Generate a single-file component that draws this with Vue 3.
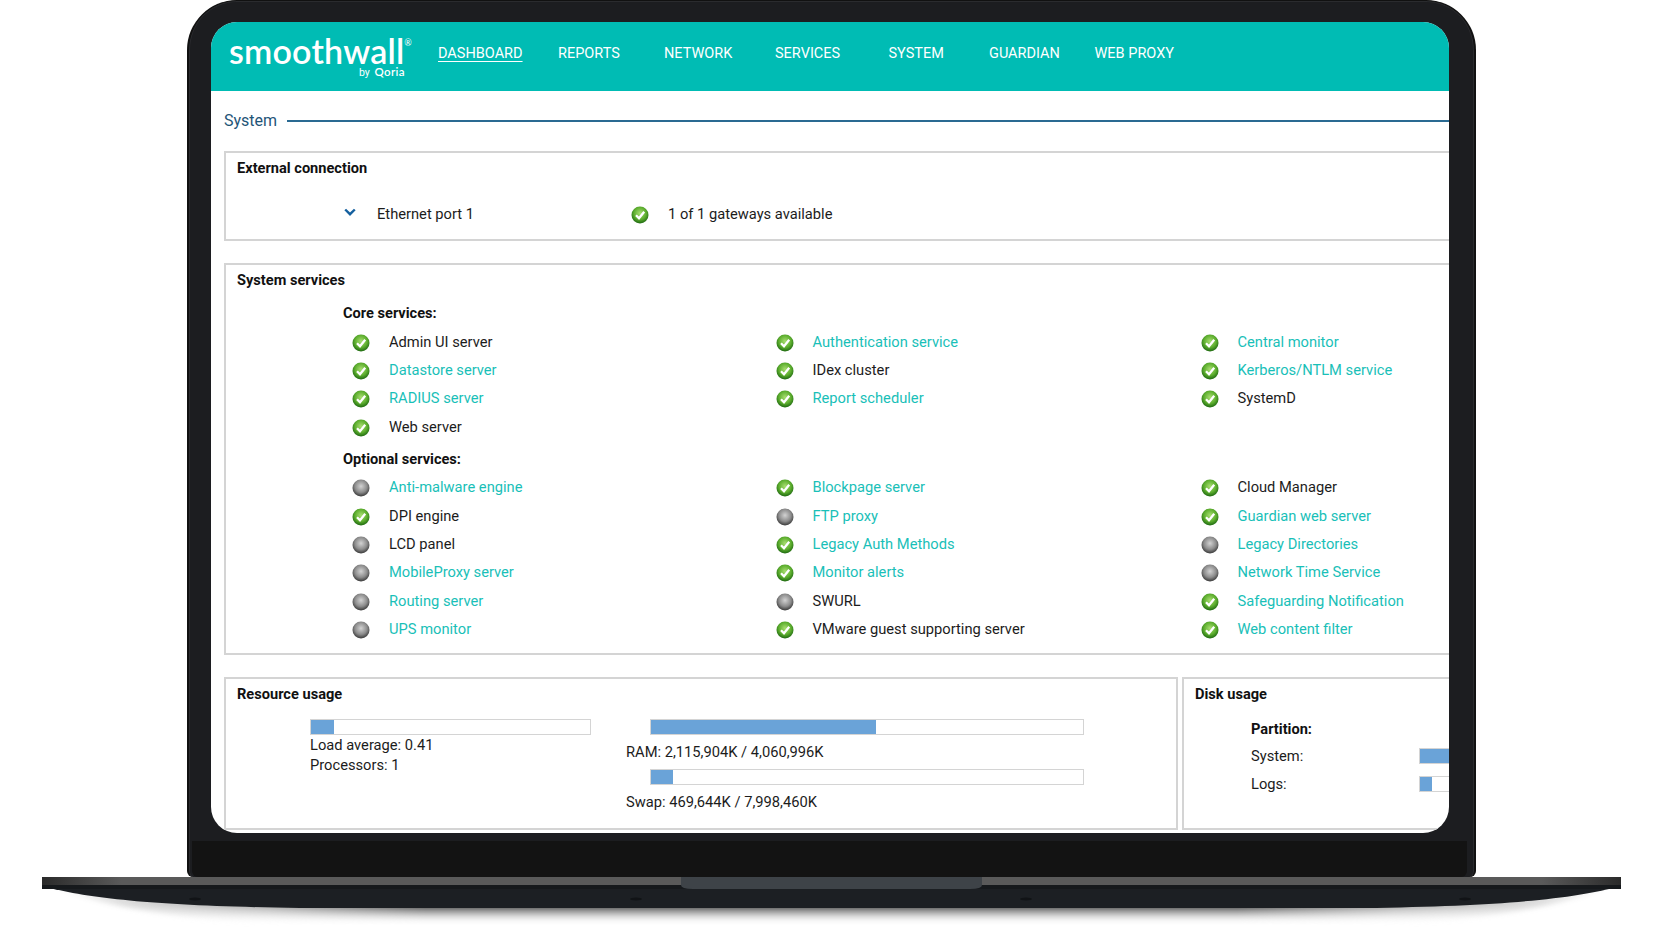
<script setup>
const navItems = [
  { label: 'DASHBOARD', active: true },
  { label: 'REPORTS' },
  { label: 'NETWORK' },
  { label: 'SERVICES' },
  { label: 'SYSTEM' },
  { label: 'GUARDIAN' },
  { label: 'WEB PROXY' },
]

// ok: status icon, link: teal text
const coreServices = [
  { name: 'Admin UI server', ok: true },
  { name: 'Authentication service', ok: true, link: true },
  { name: 'Central monitor', ok: true, link: true },
  { name: 'Datastore server', ok: true, link: true },
  { name: 'IDex cluster', ok: true },
  { name: 'Kerberos/NTLM service', ok: true, link: true },
  { name: 'RADIUS server', ok: true, link: true },
  { name: 'Report scheduler', ok: true, link: true },
  { name: 'SystemD', ok: true },
  { name: 'Web server', ok: true },
]

const optionalServices = [
  { name: 'Anti-malware engine', link: true },
  { name: 'Blockpage server', ok: true, link: true },
  { name: 'Cloud Manager', ok: true },
  { name: 'DPI engine', ok: true },
  { name: 'FTP proxy', link: true },
  { name: 'Guardian web server', ok: true, link: true },
  { name: 'LCD panel' },
  { name: 'Legacy Auth Methods', ok: true, link: true },
  { name: 'Legacy Directories', link: true },
  { name: 'MobileProxy server', link: true },
  { name: 'Monitor alerts', ok: true, link: true },
  { name: 'Network Time Service', link: true },
  { name: 'Routing server', link: true },
  { name: 'SWURL' },
  { name: 'Safeguarding Notification', ok: true, link: true },
  { name: 'UPS monitor', link: true },
  { name: 'VMware guest supporting server', ok: true },
  { name: 'Web content filter', ok: true, link: true },
]

const usage = {
  load: 8.4,
  ram: 52,
  swap: 5.1,
  system: 52,
  logs: 4.7,
}
</script>

<template>
  <div class="page">
    <svg class="defs" width="0" height="0" aria-hidden="true">
      <defs>
        <radialGradient id="greenDot" cx="50%" cy="40%" r="60%">
          <stop offset="0%" stop-color="#a8de70" />
          <stop offset="60%" stop-color="#5dae2e" />
          <stop offset="100%" stop-color="#1d6810" />
        </radialGradient>
        <radialGradient id="greyDot" cx="50%" cy="40%" r="60%">
          <stop offset="0%" stop-color="#d2d2d2" />
          <stop offset="60%" stop-color="#8c8c8c" />
          <stop offset="100%" stop-color="#383838" />
        </radialGradient>
      </defs>
    </svg>

    <div class="laptop">
      <div class="bezel">
        <div class="screen">
          <header class="topbar">
            <div class="logo">
              <div class="logo-main">smoothwall<sup>®</sup></div>
              <div class="logo-sub">by <b>Qoria</b></div>
            </div>
            <nav class="nav">
              <a v-for="item in navItems" :key="item.label" :class="{ active: item.active }">
                <span>{{ item.label }}</span>
              </a>
            </nav>
          </header>

          <main class="content">
            <div class="heading">
              <span>System</span>
              <i></i>
            </div>

            <section class="panel external">
              <h3>External connection</h3>
              <div class="port-row">
                <svg class="chevron" width="12" height="8" viewBox="0 0 12 8">
                  <path d="M1.2 1.5 6 6.2l4.8-4.7" fill="none" stroke="#15609f" stroke-width="2.4" />
                </svg>
                <span class="port-name">Ethernet port 1</span>
                <svg class="dot" viewBox="0 0 18 18">
                  <circle cx="9" cy="9" r="8.5" fill="url(#greenDot)" />
                  <path d="M5 9.2 8 12.2l5.2-6.4" fill="none" stroke="#fff" stroke-width="2.3" />
                </svg>
                <span>1 of 1 gateways available</span>
              </div>
            </section>

            <section class="panel services">
              <h3>System services</h3>
              <h4>Core services:</h4>
              <div class="service-grid">
                <div v-for="s in coreServices" :key="s.name" class="service">
                  <svg class="dot" viewBox="0 0 18 18">
                    <circle cx="9" cy="9" r="8.5" :fill="s.ok ? 'url(#greenDot)' : 'url(#greyDot)'" />
                    <path v-if="s.ok" d="M5 9.2 8 12.2l5.2-6.4" fill="none" stroke="#fff" stroke-width="2.3" />
                  </svg>
                  <span :class="{ link: s.link }">{{ s.name }}</span>
                </div>
              </div>
              <h4>Optional services:</h4>
              <div class="service-grid">
                <div v-for="s in optionalServices" :key="s.name" class="service">
                  <svg class="dot" viewBox="0 0 18 18">
                    <circle cx="9" cy="9" r="8.5" :fill="s.ok ? 'url(#greenDot)' : 'url(#greyDot)'" />
                    <path v-if="s.ok" d="M5 9.2 8 12.2l5.2-6.4" fill="none" stroke="#fff" stroke-width="2.3" />
                  </svg>
                  <span :class="{ link: s.link }">{{ s.name }}</span>
                </div>
              </div>
            </section>

            <div class="bottom-row">
              <section class="panel resource">
                <h3>Resource usage</h3>
                <div class="resource-body">
                  <div class="load">
                    <div class="bar"><div class="fill" :style="{ width: usage.load + '%' }"></div></div>
                    <p>Load average: 0.41</p>
                    <p>Processors: 1</p>
                  </div>
                  <div class="memory">
                    <div class="bar"><div class="fill" :style="{ width: usage.ram + '%' }"></div></div>
                    <p>RAM: 2,115,904K / 4,060,996K</p>
                    <div class="bar"><div class="fill" :style="{ width: usage.swap + '%' }"></div></div>
                    <p>Swap: 469,644K / 7,998,460K</p>
                  </div>
                </div>
              </section>
              <section class="panel disk">
                <h3>Disk usage</h3>
                <div class="disk-body">
                  <strong>Partition:</strong>
                  <div class="disk-row">
                    <span>System:</span>
                    <div class="bar"><div class="fill" :style="{ width: usage.system + '%' }"></div></div>
                  </div>
                  <div class="disk-row">
                    <span>Logs:</span>
                    <div class="bar"><div class="fill" :style="{ width: usage.logs + '%' }"></div></div>
                  </div>
                </div>
              </section>
            </div>
          </main>
        </div>
        <div class="chin"></div>
      </div>

      <svg class="base" width="1663" height="56" viewBox="0 0 1663 56">
        <defs>
          <linearGradient id="shadowFade" x1="0" y1="0" x2="0" y2="1">
            <stop offset="0%" stop-color="#222" />
            <stop offset="50%" stop-color="#2c2c2c" />
            <stop offset="72%" stop-color="#a0a0a0" stop-opacity="0.8" />
            <stop offset="100%" stop-color="#fff" stop-opacity="0" />
          </linearGradient>
          <linearGradient id="shadowEnds" x1="0" y1="0" x2="1" y2="0">
            <stop offset="0%" stop-color="#000" />
            <stop offset="14%" stop-color="#777" />
            <stop offset="24%" stop-color="#fff" />
            <stop offset="76%" stop-color="#fff" />
            <stop offset="86%" stop-color="#777" />
            <stop offset="100%" stop-color="#000" />
          </linearGradient>
          <mask id="shadowMask" maskUnits="userSpaceOnUse" x="0" y="0" width="1663" height="56">
            <rect x="50" y="0" width="1563" height="56" fill="url(#shadowEnds)" />
          </mask>
          <linearGradient id="lidEdge" x1="0" y1="0" x2="1" y2="0">
            <stop offset="0%" stop-color="#2a2a2a" />
            <stop offset="5%" stop-color="#5a5a5a" />
            <stop offset="95%" stop-color="#5a5a5a" />
            <stop offset="100%" stop-color="#2a2a2a" />
          </linearGradient>
          <filter id="soft" x="-5%" y="-30%" width="110%" height="160%">
            <feGaussianBlur stdDeviation="2.5" />
          </filter>
        </defs>
        <g mask="url(#shadowMask)">
          <path d="M50 8 H1613 Q1540 40 1380 47 H283 Q123 40 50 8Z" fill="url(#shadowFade)" filter="url(#soft)" />
        </g>
        <path d="M42 0 H1621 V9 C1573 22 1503 29 1363 31 H300 C160 29 90 22 42 9Z" fill="#1c1f23" />
        <rect x="42" y="8" width="1579" height="4" fill="#16191c" />
        <rect x="42" y="0" width="1579" height="8" fill="url(#lidEdge)" />
        <path d="M681 0 H982 V8 Q982 12 970 12 H693 Q681 12 681 8Z" fill="#3e4348" />
        <ellipse cx="195" cy="22" rx="6" ry="1.5" fill="#111316" />
        <ellipse cx="636" cy="22" rx="6" ry="1.5" fill="#111316" />
        <ellipse cx="1026" cy="22" rx="6" ry="1.5" fill="#111316" />
        <ellipse cx="1465" cy="22" rx="6" ry="1.5" fill="#111316" />
      </svg>
    </div>
  </div>
</template>

<style>
html,
body {
  margin: 0;
  background: #fff;
}
</style>

<style scoped>
.page {
  width: 1663px;
  height: 933px;
  overflow: hidden;
  background: #fff;
  font-family: Roboto, 'Liberation Sans', sans-serif;
  font-size: 14.7px;
  color: #1c1c1c;
}

.defs {
  position: absolute;
}

.laptop {
  display: flex;
  flex-direction: column;
}

.bezel {
  box-sizing: border-box;
  width: 1289px;
  height: 877px;
  margin-left: 187px;
  padding: 22px 27px 0 24px;
  background: #1c1d20;
  border: 2px solid #111;
  border-bottom: none;
  border-top-width: 1px;
  border-radius: 50px 50px 6px 6px;
  box-shadow: inset 0 1px 0 #2a2b2e, inset 1px 0 0 #2a2b2e, inset -1px 0 0 #2a2b2e;
  display: flex;
  flex-direction: column;
}

.screen {
  height: 811px;
  flex: none;
  margin: -1px -2px 0 -2px;
  background: #fff;
  border-radius: 26px;
  overflow: hidden;
}

.chin {
  flex: 1;
  margin: 8px -20px 0 -21px;
  background: #131313;
  border-radius: 0 0 6px 6px;
}

.topbar {
  height: 69px;
  background: #00bcb4;
  display: flex;
  color: #fff;
}

.logo {
  width: 220px;
  padding: 10.5px 0 0 18px;
  box-sizing: border-box;
  flex: none;
}

.logo-main {
  font-family: Lato, sans-serif;
  font-weight: 600;
  font-size: 34px;
  line-height: 35px;
  letter-spacing: 0.2px;
}

.logo-main sup {
  font-size: 9px;
  line-height: 0;
  vertical-align: 18px;
  font-weight: 400;
}

.logo-sub {
  margin-top: -1.5px;
  text-align: right;
  width: 176px;
  font-size: 10.5px;
  line-height: 12px;
}

.logo-sub b {
  font-family: Lato, sans-serif;
  font-weight: 600;
  font-size: 11.5px;
  letter-spacing: 0.4px;
  margin-left: 2px;
}

.nav {
  display: flex;
  align-items: center;
  margin: -7px 0 0 7px;
  font-size: 14.5px;
}

.nav a {
  display: block;
  flex: none;
}

.nav a:nth-child(1) { width: 120px; }
.nav a:nth-child(2) { width: 106px; }
.nav a:nth-child(3) { width: 111px; }
.nav a:nth-child(4) { width: 113.5px; }
.nav a:nth-child(5) { width: 100.5px; }
.nav a:nth-child(6) { width: 105.5px; }

.nav a.active span {
  text-decoration: underline;
  text-underline-offset: 3px;
}

.content {
  padding: 17px 0 0 13px;
}

.heading {
  display: flex;
  align-items: center;
  gap: 10px;
  height: 25px;
  font-size: 16px;
  color: #1f5578;
  margin-bottom: 18px;
}

.heading i {
  flex: 1;
  height: 2px;
  background: #2a6a92;
  margin-top: 1px;
}

.panel {
  box-sizing: border-box;
  border: 2px solid #d4d4d4;
}

.panel h3 {
  margin: 0;
  font-size: 14.6px;
  font-weight: 700;
  color: #111;
  line-height: 18px;
  padding: 6px 0 0 11px;
}

.external {
  height: 90px;
  margin-right: -4px;
  margin-bottom: 22px;
  border-right: none;
}

.port-row {
  display: flex;
  align-items: center;
  padding: 24.5px 0 0 118px;
  height: 24px;
}

.chevron {
  flex: none;
  margin-top: -3px;
}

.port-name {
  margin-left: 21px;
  width: 254px;
}

.port-row .dot {
  margin-right: 19px;
}

.dot {
  width: 18px;
  height: 18px;
  flex: none;
  margin-top: 2px;
}

.services {
  height: 392px;
  margin-right: -4px;
  margin-bottom: 22px;
  border-right: none;
}

.services h4 {
  margin: 0;
  padding-left: 117px;
  font-size: 14.6px;
  font-weight: 700;
  line-height: 18px;
  color: #111;
}

.services h3 + h4 {
  margin-top: 15.4px;
}

.service-grid {
  display: grid;
  grid-template-columns: 423.5px 425px 1fr;
  grid-auto-rows: 28.4px;
  padding: 5px 0 0 126px;
  margin-bottom: 9px;
}

.service {
  display: flex;
  align-items: center;
  gap: 19px;
}

.link {
  color: #19c0b8;
}

.bottom-row {
  display: flex;
  gap: 4px;
  height: 153px;
  margin-right: -4px;
}

.resource {
  width: 954px;
  flex: none;
}

.disk {
  flex: 1;
  border-right: none;
}

.resource-body {
  display: flex;
  padding: 15.5px 0 0 84px;
}

.bar {
  box-sizing: border-box;
  height: 16px;
  border: 1.5px solid #d4d4d4;
  background: #fff;
}

.fill {
  height: 100%;
  background: #6aa3d8;
}

.resource p {
  margin: 0;
  line-height: 20.5px;
}

.load {
  width: 281px;
  flex: none;
}

.memory {
  margin-left: 35px;
  width: 461px;
}

.memory .bar {
  margin-left: 24px;
  width: 434px;
}

.resource .memory p {
  margin: 7px 0;
}

.disk-body {
  padding: 16px 0 0 67px;
}

.disk-body strong {
  display: block;
  font-size: 14.6px;
  color: #111;
  line-height: 20px;
  margin-bottom: 3px;
}

.disk-row {
  display: flex;
  align-items: center;
  height: 28px;
}

.disk-row span {
  width: 168px;
  flex: none;
}

.disk-row .bar {
  width: 260px;
  flex: none;
}

.base {
  display: block;
}
</style>
